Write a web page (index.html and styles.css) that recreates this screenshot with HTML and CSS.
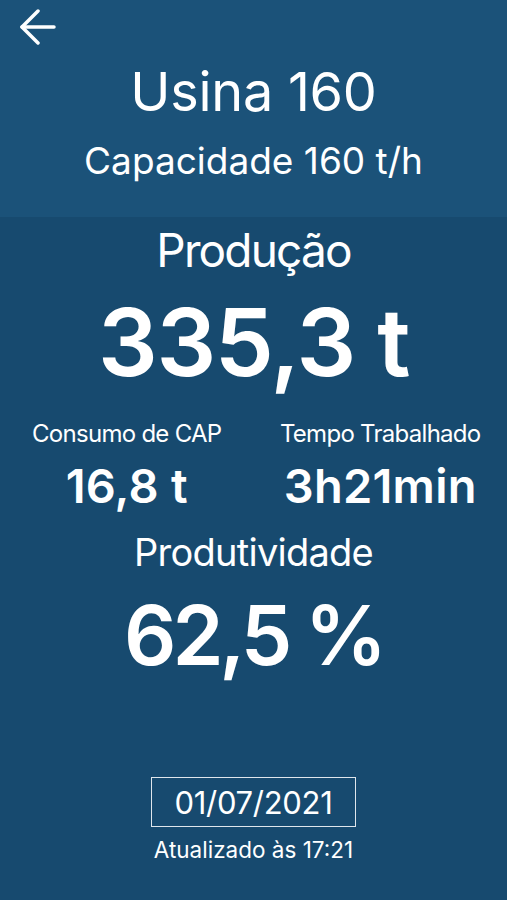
FILE: index.html
```html
<!DOCTYPE html>
<html lang="pt-BR">

<head>
    <meta charset="UTF-8">
    <meta name="viewport" content="width=device-width, initial-scale=1.0">
    <title>Usina 160</title>
    <link rel="stylesheet" href="styles.css">
</head>

<body>
    <div class="screen">
        <header class="header">
            <a class="back" href="#" aria-label="Voltar">
                <svg width="36" height="36" viewBox="0 0 36 36" fill="none" stroke="#fff" stroke-width="3.5"
                    stroke-linecap="round" stroke-linejoin="round">
                    <path d="M34 18H2" />
                    <path d="M18 2L2 18L18 34" />
                </svg>
            </a>
            <h1 class="title">Usina 160</h1>
            <p class="subtitle">Capacidade 160 t/h</p>
        </header>

        <main class="content">
            <h2 class="label-lg">Produção</h2>
            <div class="value-xl">335,3 t</div>

            <div class="stats">
                <div class="stat">
                    <div class="stat-label">Consumo de CAP</div>
                    <div class="stat-value">16,8 t</div>
                </div>
                <div class="stat">
                    <div class="stat-label">Tempo Trabalhado</div>
                    <div class="stat-value">3h21min</div>
                </div>
            </div>

            <h2 class="label-md">Produtividade</h2>
            <div class="value-lg">62,5 %</div>
        </main>

        <footer class="footer">
            <div class="date">01/07/2021</div>
            <div class="updated">Atualizado às 17:21</div>
        </footer>
    </div>
</body>

</html>
```

FILE: styles.css
```css
body {
    margin: 0;
    font-family: Inter, "Liberation Sans", sans-serif;
    background-color: #174a6f;
    color: #fff;
}

.screen {
    display: flex;
    flex-direction: column;
    min-height: 900px;
    text-align: center;
}

.header {
    background-color: #1b5279;
    padding: 9px 0 38px;
}

.back {
    display: block;
    width: 36px;
    height: 36px;
    margin-left: 20px;
}

.back svg {
    display: block;
}

.title {
    margin: 20px 0 0;
    font-size: 54px;
    font-weight: 400;
    line-height: 1;
    letter-spacing: -0.005em;
}

.subtitle {
    margin: 23px 0 0;
    font-size: 37px;
    line-height: 1;
}

.content {
    padding-top: 10px;
}

.label-lg {
    margin: 0;
    font-size: 46px;
    font-weight: 400;
    line-height: 1;
    letter-spacing: -0.04em;
}

.value-xl {
    margin-top: 22px;
    font-size: 94px;
    font-weight: 600;
    line-height: 1;
    letter-spacing: -0.015em;
}

.stats {
    display: grid;
    grid-template-columns: 1fr 1fr;
    margin-top: 33px;
}

.stat-label {
    font-size: 24px;
    line-height: 1;
    letter-spacing: -0.03em;
}

.stat-value {
    margin-top: 16px;
    font-size: 47px;
    font-weight: 600;
    line-height: 1;
    letter-spacing: 0.005em;
}

.label-md {
    margin: 24px 0 0;
    font-size: 38px;
    font-weight: 400;
    line-height: 1;
    letter-spacing: -0.02em;
}

.value-lg {
    margin-top: 24px;
    font-size: 82px;
    font-weight: 600;
    line-height: 1;
    letter-spacing: -0.05em;
}

.footer {
    display: flex;
    flex-direction: column;
    align-items: center;
    margin-top: 100px;
}

.date {
    padding: 9px 23px 8px;
    border: 1px solid #dfe6ec;
    font-size: 31px;
    line-height: 1;
    letter-spacing: -0.01em;
}

.updated {
    margin-top: 12px;
    font-size: 22.5px;
    line-height: 1;
}
```
